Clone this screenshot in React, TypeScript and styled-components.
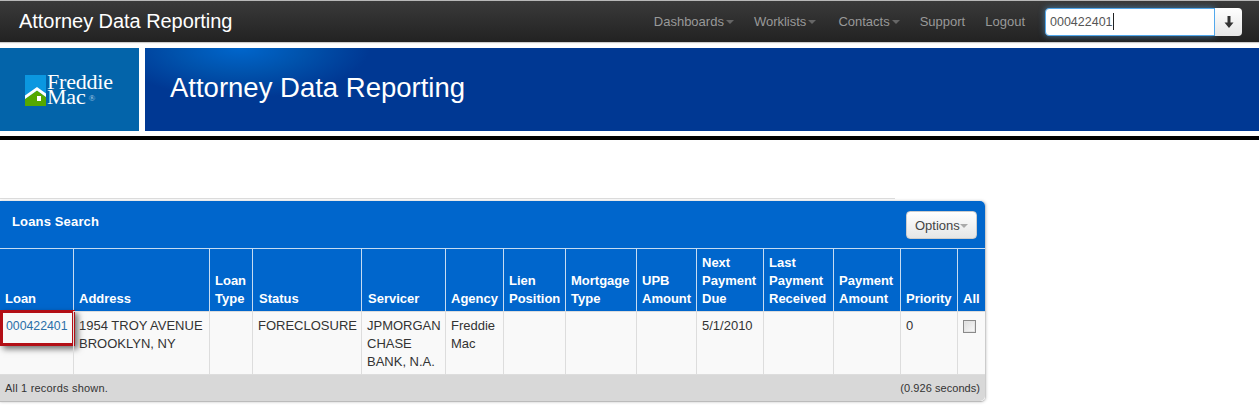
import React from "react";
import styled, { createGlobalStyle } from "styled-components";

const Global = createGlobalStyle`
  html, body { margin: 0; padding: 0; background: #fff; }
  body { font-family: "Liberation Sans", Arial, sans-serif; width: 1259px; height: 405px; overflow: hidden; }
  * { box-sizing: border-box; }
`;

const Page = styled.div`
  display: flex;
  flex-direction: column;
`;

const NavBar = styled.header`
  height: 42px;
  display: flex;
  align-items: center;
  padding: 0 17px 0 19px;
  background: linear-gradient(#3a3a3a, #222222);
  border-top: 1px solid #b8b8b8;
  box-shadow: 0 1px 1px rgba(0, 0, 0, 0.2);
`;

const Brand = styled.div`
  font-size: 20px;
  letter-spacing: -0.05px;
  color: #fff;
  margin-right: auto;
`;

const NavLink = styled.a`
  display: flex;
  align-items: center;
  font-size: 13px;
  color: #999;
  margin-right: ${(p: { $gap: number }) => p.$gap}px;
`;

const Caret = styled.span`
  display: inline-block;
  width: 0;
  height: 0;
  margin-left: 2px;
  margin-top: 1px;
  border-left: 4px solid transparent;
  border-right: 4px solid transparent;
  border-top: 4px solid ${(p: { $color: string }) => p.$color};
`;

const SearchGroup = styled.div`
  display: flex;
  height: 28px;
  margin-left: 20px;
`;

const SearchInput = styled.div`
  width: 170px;
  background: #fff;
  border: 1px solid #52a8ec;
  border-radius: 4px 0 0 4px;
  box-shadow: 0 0 6px rgba(82, 168, 236, 0.6);
  font-size: 12.5px;
  color: #555;
  padding-left: 4px;
  display: flex;
  align-items: center;
`;

const TextCursor = styled.span`
  display: inline-block;
  width: 1px;
  height: 17px;
  background: #222;
`;

const SearchButton = styled.div`
  width: 27px;
  background: linear-gradient(#fff, #e6e6e6);
  border-radius: 0 4px 4px 0;
  display: flex;
  align-items: center;
  justify-content: center;
`;

const BannerRow = styled.div`
  display: flex;
  height: 83px;
  margin-top: 6px;
  gap: 6px;
`;

const LogoBlock = styled.div`
  width: 139px;
  background: #0364aa;
  display: flex;
  align-items: center;
  padding-left: 25px;
  padding-top: 1px;
  gap: 1px;
`;

const LogoWords = styled.div`
  font-family: "Liberation Serif", serif;
  font-size: 22px;
  letter-spacing: -0.2px;
  line-height: 15px;
  color: #fff;
`;

const Registered = styled.span`
  font-size: 9px;
  letter-spacing: 0;
  color: #a9cbe4;
  vertical-align: 3px;
  margin-left: 3px;
`;

const BannerTitle = styled.div`
  flex: 1;
  background: radial-gradient(ellipse 130px 50px at 95px 0, #0066cc 0%, #0052ac 50%, #003893 100%), #003893;
  background-color: #003893;
  color: #fff;
  font-size: 27.5px;
  padding-left: 25px;
  display: flex;
  align-items: center;
  padding-bottom: 3px;
`;

const BlackRule = styled.div`
  height: 4px;
  background: #000;
  margin-top: 5px;
`;

const ContentArea = styled.main`
  padding-top: 58px;
`;

const HairRule = styled.div`
  width: 895px;
  height: 1px;
  background: #ddd;
  margin-bottom: 2px;
`;

const Panel = styled.section`
  width: 986px;
  border-radius: 0 5px 5px 0;
  box-shadow: 0 0 3px rgba(0, 0, 0, 0.25);
  border-right: 1px solid #ccc;
  border-bottom: 1px solid #bbb;
`;

const PanelHead = styled.div`
  height: 47px;
  background: #0066cc;
  border-radius: 0 5px 0 0;
  display: flex;
  justify-content: space-between;
  padding: 10px 8px 0 12px;
`;

const PanelTitle = styled.div`
  font-size: 13px;
  font-weight: bold;
  letter-spacing: 0.15px;
  color: #fff;
  line-height: 18px;
  margin-top: 2px;
`;

const OptionsButton = styled.div`
  width: 71px;
  height: 28px;
  border-radius: 4px;
  background: linear-gradient(#fff, #e6e6e6);
  border: 1px solid #ccc;
  font-size: 13px;
  color: #444;
  display: flex;
  align-items: center;
  padding-left: 8px;
`;

const OptionsCaret = styled(Caret)`
  margin-left: 0;
`;

const Table = styled.table`
  width: 985px;
  table-layout: fixed;
  border-collapse: separate;
  border-spacing: 0;
`;

const HeadCell = styled.th<{ $indent: number }>`
  background: #0066cc;
  color: #fff;
  font-size: 13px;
  line-height: 18px;
  font-weight: bold;
  text-align: left;
  vertical-align: bottom;
  padding: 0 0 3px ${(p) => p.$indent}px;
  height: 63px;
  border-top: 1px solid #c6dcf2;
  border-left: 1px solid #c6dcf2;
  &:first-child { border-left: 0; }
`;

const BodyRow = styled.tr`
  background: #f9f9f9;
`;

const BodyCell = styled.td`
  position: relative;
  font-size: 13px;
  line-height: 18px;
  color: #333;
  vertical-align: top;
  padding: 5px 0 0 5px;
  height: 63px;
  border-top: 1px solid #ddd;
  border-left: 1px solid #ddd;
  &:first-child { border-left: 0; }
`;

const LoanLink = styled.a`
  color: #2a6fa8;
  font-size: 12.3px;
  margin-left: 1px;
`;

const Highlight = styled.div`
  position: absolute;
  left: 0;
  top: -2px;
  width: 75px;
  height: 36px;
  border: 3px solid #b30f16;
  box-shadow: 3px 3px 6px rgba(0, 0, 0, 0.55);
`;

const CheckBox = styled.span`
  display: block;
  width: 13px;
  height: 13px;
  margin-top: 3px;
  border: 1px solid #8a8a8a;
  background: linear-gradient(135deg, #dcdcdc, #fafafa);
  box-shadow: inset 0 0 0 1px #e4e4e4;
`;

const PanelFoot = styled.div`
  height: 27px;
  background: #d8d8d8;
  display: flex;
  align-items: center;
  justify-content: space-between;
  padding: 0 5px;
  font-size: 11px;
  color: #333;
  letter-spacing: 0.2px;
  border-top: 1px solid #ddd;
  border-radius: 0 0 5px 0;
`;

const FootTime = styled.span`
  letter-spacing: 0.05px;
`;

const columns = [
  { w: 73, indent: 5, head: ["Loan"] },
  { w: 136, indent: 5, head: ["Address"] },
  { w: 43, indent: 5, head: ["Loan", "Type"] },
  { w: 109, indent: 6, head: ["Status"] },
  { w: 84, indent: 6, head: ["Servicer"] },
  { w: 58, indent: 5, head: ["Agency"] },
  { w: 62, indent: 5, head: ["Lien", "Position"] },
  { w: 71, indent: 5, head: ["Mortgage", "Type"] },
  { w: 60, indent: 5, head: ["UPB", "Amount"] },
  { w: 67, indent: 5, head: ["Next", "Payment", "Due"] },
  { w: 70, indent: 5, head: ["Last", "Payment", "Received"] },
  { w: 67, indent: 5, head: ["Payment", "Amount"] },
  { w: 57, indent: 5, head: ["Priority"] },
  { w: 28, indent: 5, head: ["All"] },
];

const Lines = ({ lines }: { lines: string[] }) => (
  <>
    {lines.map((l, i) => (
      <React.Fragment key={l}>
        {i > 0 && <br />}
        {l}
      </React.Fragment>
    ))}
  </>
);

const LogoMark = () => (
  <svg width="21" height="31" viewBox="0 0 21 31">
    <rect width="21" height="31" fill="#0b97e0" />
    <path d="M0 31V24L12 15.5 21 22V31Z" fill="#55a800" />
    <path d="M0 24V20.5L12 12 21 18.5V22L12 15.5Z" fill="#fff" />
    <rect x="12" y="21" width="4" height="5" fill="#fff" />
  </svg>
);

export default function App() {
  return (
    <Page>
      <Global />
      <NavBar>
        <Brand>Attorney Data Reporting</Brand>
        <NavLink $gap={20}>Dashboards<Caret $color="#666" /></NavLink>
        <NavLink $gap={22}>Worklists<Caret $color="#666" /></NavLink>
        <NavLink $gap={20}>Contacts<Caret $color="#666" /></NavLink>
        <NavLink $gap={20}>Support</NavLink>
        <NavLink $gap={0}>Logout</NavLink>
        <SearchGroup>
          <SearchInput>000422401<TextCursor /></SearchInput>
          <SearchButton>
            <svg width="10" height="12" viewBox="0 0 10 12">
              <path d="M3.5 0H6.5V6.5H9.5L5 12 .5 6.5H3.5Z" fill="#333" />
            </svg>
          </SearchButton>
        </SearchGroup>
      </NavBar>
      <BannerRow>
        <LogoBlock>
          <LogoMark />
          <LogoWords>Freddie<br />Mac<Registered>®</Registered></LogoWords>
        </LogoBlock>
        <BannerTitle>Attorney Data Reporting</BannerTitle>
      </BannerRow>
      <BlackRule />
      <ContentArea>
        <HairRule />
        <Panel>
          <PanelHead>
            <PanelTitle>Loans Search</PanelTitle>
            <OptionsButton>Options<OptionsCaret $color="#aaa" /></OptionsButton>
          </PanelHead>
          <Table>
            <colgroup>
              {columns.map((c, i) => <col key={i} width={c.w} />)}
            </colgroup>
            <thead>
              <tr>
                {columns.map((c, i) => (
                  <HeadCell key={i} $indent={c.indent}><Lines lines={c.head} /></HeadCell>
                ))}
              </tr>
            </thead>
            <tbody>
              <BodyRow>
                <BodyCell>
                  <LoanLink>000422401</LoanLink>
                  <Highlight />
                </BodyCell>
                <BodyCell><Lines lines={["1954 TROY AVENUE", "BROOKLYN, NY"]} /></BodyCell>
                <BodyCell />
                <BodyCell>FORECLOSURE</BodyCell>
                <BodyCell><Lines lines={["JPMORGAN", "CHASE", "BANK, N.A."]} /></BodyCell>
                <BodyCell><Lines lines={["Freddie", "Mac"]} /></BodyCell>
                <BodyCell />
                <BodyCell />
                <BodyCell />
                <BodyCell>5/1/2010</BodyCell>
                <BodyCell />
                <BodyCell />
                <BodyCell>0</BodyCell>
                <BodyCell><CheckBox /></BodyCell>
              </BodyRow>
            </tbody>
          </Table>
          <PanelFoot>
            <span>All 1 records shown.</span>
            <FootTime>(0.926 seconds)</FootTime>
          </PanelFoot>
        </Panel>
      </ContentArea>
    </Page>
  );
}
